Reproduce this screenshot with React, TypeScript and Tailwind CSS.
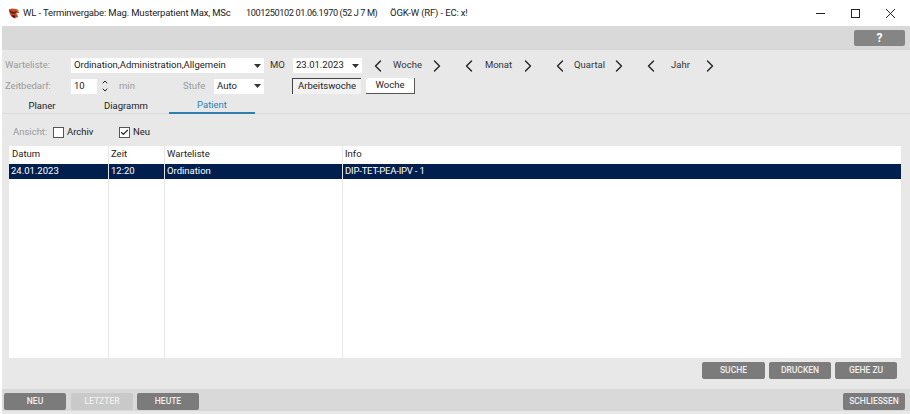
import { Check, ChevronDown, ChevronLeft, ChevronRight, ChevronUp } from "lucide-react";

function Logo() {
  return (
    <svg width="13" height="13" viewBox="0 0 14 13" className="shrink-0">
      <path d="M2 2 L6 1 L11 2 L13 6 L10 6 L12 10 L8 12 L5 10 L3 7 Z" fill="#d2451e" />
      <path d="M2 3 L7 5 L11 4 L8 7 L4 6 Z" fill="#4a2a20" />
      <path d="M5 8 L9 9 L8 11 L6 10 Z" fill="#2e1a14" />
      <path d="M10 2 L13 3 L12 5 Z" fill="#e8893c" />
    </svg>
  );
}

function WindowControls() {
  return (
    <div className="ml-auto flex items-center gap-[26px] pr-[15px]">
      <svg width="9" height="9" viewBox="0 0 9 9">
        <path d="M0 4.5 H9" stroke="#222" strokeWidth="1" />
      </svg>
      <svg width="9" height="9" viewBox="0 0 9 9">
        <rect x="0.5" y="0.5" width="8" height="8" fill="none" stroke="#222" strokeWidth="1" />
      </svg>
      <svg width="9" height="9" viewBox="0 0 9 9">
        <path d="M0 0 L9 9 M9 0 L0 9" stroke="#222" strokeWidth="1" />
      </svg>
    </div>
  );
}

function Select({ value, className }: { value: string; className: string }) {
  return (
    <div className={`flex h-[15px] items-center justify-between bg-white pl-[3px] pr-[2px] text-[#222] ${className}`}>
      <span>{value}</span>
      <svg width="7" height="4" viewBox="0 0 7 4" className="mr-[1px]">
        <path d="M0 0 H7 L3.5 4 Z" fill="#333" />
      </svg>
    </div>
  );
}

function Stepper({ label, className }: { label: string; className: string }) {
  return (
    <div className={`flex items-center ${className}`}>
      <ChevronLeft size={20} strokeWidth={1.6} className="text-[#222]" />
      <span className="flex-1 text-center text-[#333]">{label}</span>
      <ChevronRight size={20} strokeWidth={1.6} className="text-[#222]" />
    </div>
  );
}

function GrayButton({ label, className, disabled }: { label: string; className: string; disabled?: boolean }) {
  return (
    <button
      className={`flex h-[17px] items-center justify-center rounded-[2px] text-[8.5px] font-medium ${
        disabled ? "bg-[#c9c9c9] text-[#eeeeee]" : "bg-[#7b7b7b] text-[#f0f0f0]"
      } ${className}`}
    >
      {label}
    </button>
  );
}

function CheckBox({ checked }: { checked?: boolean }) {
  return (
    <span className="flex h-[11px] w-[11px] items-center justify-center border border-[#555] bg-white">
      {checked && <Check size={9} strokeWidth={3} className="text-[#222]" />}
    </span>
  );
}

const columns = [
  { title: "Datum", value: "24.01.2023", width: "w-[100px]", headPad: "pl-[3px]", valueClass: "" },
  { title: "Zeit", value: "12:20", width: "w-[56px]", headPad: "pl-[2px]", valueClass: "" },
  { title: "Warteliste", value: "Ordination", width: "w-[178px]", headPad: "pl-[2px]", valueClass: "" },
  { title: "Info", value: "DIP-TET-PEA-IPV - 1", width: "flex-1", headPad: "pl-[2px]", valueClass: "tracking-[-0.2px]" },
];

export default function App() {
  return (
    <div className="flex h-[414px] w-[910px] flex-col overflow-hidden bg-white font-['Roboto',sans-serif] text-[9.5px]">
      {/* Title bar */}
      <div className="flex h-[26px] shrink-0 items-center whitespace-nowrap pl-[7px] text-[9.5px] tracking-[-0.15px] text-[#222]">
        <Logo />
        <span className="ml-[3px] w-[223px]">WL - Terminvergabe: Mag. Musterpatient Max, MSc</span>
        <span className="w-[144px] text-[9.2px] tracking-[-0.4px]">1001250102 01.06.1970 (52 J 7 M)</span>
        <span>ÖGK-W (RF) - EC: x!</span>
        <WindowControls />
      </div>

      <div className="ml-[2px] flex min-h-0 flex-1 flex-col bg-[#e8e8e8]">
        {/* Help bar */}
        <div className="flex h-[24px] shrink-0 items-center justify-end bg-[#d9d9d9] pr-[5px]">
          <div className="flex h-[16px] w-[51px] items-center justify-center rounded-[2px] bg-[#858585] text-[12px] font-bold text-white">?</div>
        </div>

        {/* Filter rows */}
        <div className="mt-[8px] flex h-[15px] items-center pl-[3px]">
          <span className="w-[66px] text-[#9a9a9a]">Warteliste:</span>
          <Select value="Ordination,Administration,Allgemein" className="w-[193px]" />
          <span className="ml-[6px] w-[23px] text-[#333]">MO</span>
          <Select value="23.01.2023" className="w-[69px]" />
          <Stepper label="Woche" className="ml-[6px] w-[79px]" />
          <Stepper label="Monat" className="ml-[12px] w-[79px]" />
          <Stepper label="Quartal" className="ml-[12px] w-[79px]" />
          <Stepper label="Jahr" className="ml-[12px] w-[79px]" />
        </div>
        <div className="mt-[5px] flex h-[16px] items-center pl-[3px]">
          <span className="w-[66px] text-[#9a9a9a]">Zeitbedarf:</span>
          <div className="flex h-[15px] w-[26px] items-center bg-white pl-[3px] text-[#222]">10</div>
          <div className="ml-[3px] flex w-[10px] flex-col items-center text-[#222]">
            <ChevronUp size={8} strokeWidth={3} />
            <ChevronDown size={8} strokeWidth={3} />
          </div>
          <span className="ml-[9px] w-[64px] text-[#9a9a9a]">min</span>
          <span className="w-[31px] text-[#9a9a9a]">Stufe</span>
          <Select value="Auto" className="w-[50px]" />
          <div className="ml-[28px] flex h-[16px] w-[69px] items-center justify-center border-l border-t border-[#444] bg-[#f2f2f2] text-[#222]">Arbeitswoche</div>
          <div className="ml-[5px] flex h-[16px] w-[49px] items-center justify-center border-b border-r border-[#555] bg-white text-[#222]">Woche</div>
        </div>

        {/* Tabs */}
        <div className="mt-[5px] flex h-[15px] items-center border-b border-[#dcdcdc]">
          <div className="w-[80px] text-center text-[#222]">Planer</div>
          <div className="ml-[4px] w-[80px] text-center text-[#222]">Diagramm</div>
          <div className="ml-[3px] flex h-[16px] w-[86px] items-center justify-center border-b-2 border-[#2e7fb0] text-[#2e7fb0]">Patient</div>
        </div>

        {/* View filter */}
        <div className="mt-[12px] flex h-[12px] items-center pl-[11px]">
          <span className="w-[40px] text-[#9a9a9a]">Ansicht:</span>
          <CheckBox />
          <span className="ml-[3px] w-[52px] text-[#222]">Archiv</span>
          <CheckBox checked />
          <span className="ml-[3px] text-[#222]">Neu</span>
        </div>

        {/* Table */}
        <div className="ml-[7px] mr-[9px] mt-[8px] flex h-[212px] bg-white">
          {columns.map((col) => (
            <div key={col.title} className={`flex flex-col border-r border-[#e6e6e6] last:border-r-0 ${col.width}`}>
              <div className={`flex h-[18px] items-center pb-[1px] text-[#222] ${col.headPad}`}>{col.title}</div>
              <div className={`flex h-[15px] items-center bg-[#001f4f] pl-[2px] text-white ${col.valueClass}`}>{col.value}</div>
            </div>
          ))}
        </div>

        {/* Table actions */}
        <div className="mt-[4px] flex justify-end gap-[4px] pr-[13px]">
          <GrayButton label="SUCHE" className="w-[63px]" />
          <GrayButton label="DRUCKEN" className="w-[62px]" />
          <GrayButton label="GEHE ZU" className="w-[62px]" />
        </div>

        {/* Footer */}
        <div className="mb-[3px] mt-auto flex h-[22px] items-end bg-[#d9d9d9] pb-[1px] pl-[2px] pr-[5px]">
          <GrayButton label="NEU" className="w-[62px]" />
          <GrayButton label="LETZTER" disabled className="ml-[5px] w-[62px]" />
          <GrayButton label="HEUTE" className="ml-[4px] w-[62px]" />
          <GrayButton label="SCHLIESSEN" className="ml-auto w-[62px]" />
        </div>
      </div>
    </div>
  );
}
